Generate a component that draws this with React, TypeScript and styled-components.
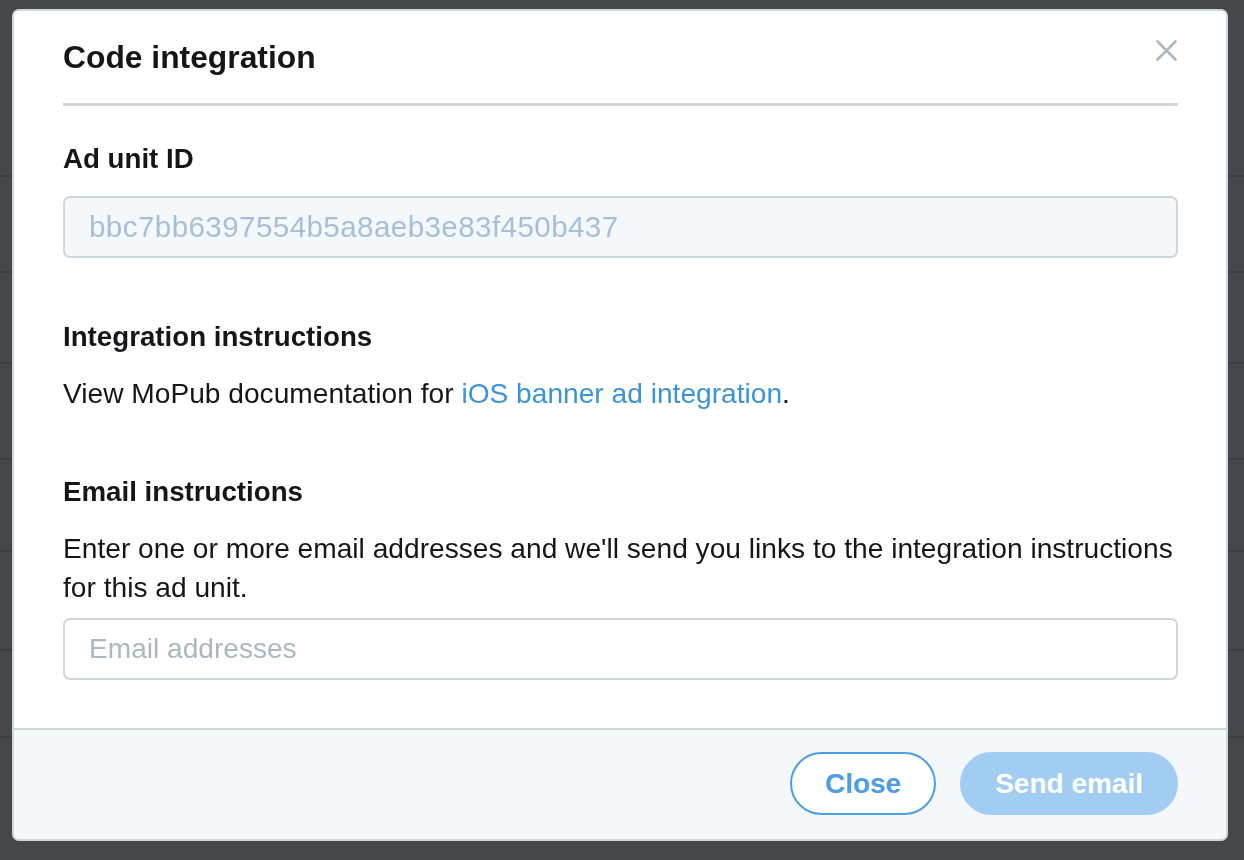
import React from "react";
import styled, { createGlobalStyle } from "styled-components";

const GlobalStyle = createGlobalStyle`
  html, body {
    margin: 0;
    padding: 0;
    background: #46474b;
    font-family: "Liberation Sans", Arial, Helvetica, sans-serif;
    color: #14171a;
  }
  * { box-sizing: border-box; }
`;

const Backdrop = styled.div`
  display: flex;
  flex-direction: column;
  height: 860px;
  overflow: hidden;
`;

const BackRow = styled.div<{ $h: number }>`
  height: ${(p) => p.$h}px;
  flex: none;
  border-bottom: 2px solid #3c3d41;
`;

const Overlay = styled.div`
  position: fixed;
  inset: 0;
  display: flex;
  align-items: flex-start;
  padding: 9px 0 0 12px;
`;

const Modal = styled.div`
  width: 1216px;
  background: #ffffff;
  border: 2px solid #ccd6dd;
  border-radius: 7px;
  overflow: hidden;
  display: flex;
  flex-direction: column;
`;

const Header = styled.div`
  margin: 0 48px 0 49px;
  padding-top: 26px;
  padding-bottom: 26px;
  border-bottom: 3px solid #d0d6db;
  display: flex;
  justify-content: space-between;
  align-items: flex-start;
`;

const Title = styled.h1`
  margin: 0;
  font-size: 31.8px;
  line-height: 40px;
  font-weight: 700;
  color: #14171a;
`;

const CloseIcon = styled.button`
  margin-top: 3px;
  margin-right: 1px;
  width: 21px;
  height: 21px;
  padding: 0;
  border: none;
  background: none;
  display: flex;
  cursor: pointer;
`;

const Body = styled.div`
  padding: 35px 48px 48px 49px;
  display: flex;
  flex-direction: column;
  gap: 61px;
`;

const Section = styled.section`
  display: flex;
  flex-direction: column;
`;

const Label = styled.h2<{ $mb?: number }>`
  margin: 0 0 ${(p) => p.$mb ?? 19}px;
  font-size: 27.7px;
  line-height: 36px;
  font-weight: 700;
  color: #14171a;
`;

const Text = styled.p`
  margin: 0;
  font-size: 28.15px;
  line-height: 39px;
  color: #14171a;
`;

const Link = styled.a`
  color: #3b94d9;
  text-decoration: none;
`;

const Input = styled.input<{ $readOnly?: boolean; $mt?: number }>`
  margin-top: ${(p) => p.$mt ?? 0}px;
  width: 100%;
  height: 62px;
  border: 2px solid #ccd6dd;
  border-radius: 7px;
  padding: 0 24px;
  font-family: "Liberation Sans", Arial, Helvetica, sans-serif;
  font-size: ${(p) => (p.$readOnly ? "29.6px" : "28.1px")};
  letter-spacing: ${(p) => (p.$readOnly ? "0.4px" : "0")};
  background: ${(p) => (p.$readOnly ? "#f5f8fa" : "#ffffff")};
  color: ${(p) => (p.$readOnly ? "#a6bfd9" : "#14171a")};
  outline: none;
  &::placeholder {
    color: #aab8c2;
  }
`;

const Footer = styled.div`
  background: #f5f8fa;
  border-top: 2px solid #ccd6dd;
  padding: 22px 48px 24px 49px;
  display: flex;
  justify-content: flex-end;
  gap: 24px;
`;

const Button = styled.button<{ $primary?: boolean }>`
  height: 63px;
  padding: 0 33px;
  border-radius: 32px;
  border: 2px solid ${(p) => (p.$primary ? "#a2cdf3" : "#4a9fe8")};
  background: ${(p) => (p.$primary ? "#a2cdf3" : "#ffffff")};
  color: ${(p) => (p.$primary ? "#ffffff" : "#4a9de6")};
  font-family: "Liberation Sans", Arial, Helvetica, sans-serif;
  font-size: 28px;
  font-weight: 700;
  cursor: pointer;
`;

const rows = [177, 96, 91, 96, 92, 99, 87, 200];

export default function App() {
  return (
    <>
      <GlobalStyle />
      <Backdrop>
        {rows.map((h, i) => (
          <BackRow key={i} $h={h} />
        ))}
      </Backdrop>
      <Overlay>
        <Modal role="dialog" aria-label="Code integration">
          <Header>
            <Title>Code integration</Title>
            <CloseIcon aria-label="Close">
              <svg width="21" height="21" viewBox="0 0 21 21">
                <path
                  d="M1.5 1.5 L19.5 19.5 M19.5 1.5 L1.5 19.5"
                  stroke="#aab8c2"
                  strokeWidth="2.6"
                  strokeLinecap="round"
                  fill="none"
                />
              </svg>
            </CloseIcon>
          </Header>
          <Body>
            <Section>
              <Label $mb={19}>Ad unit ID</Label>
              <Input $readOnly readOnly value="bbc7bb6397554b5a8aeb3e83f450b437" />
            </Section>
            <Section>
              <Label>Integration instructions</Label>
              <Text>
                View MoPub documentation for <Link href="#">iOS banner ad integration</Link>.
              </Text>
            </Section>
            <Section>
              <Label>Email instructions</Label>
              <Text>
                Enter one or more email addresses and we'll send you links to the integration instructions
                for this ad unit.
              </Text>
              <Input $mt={11} placeholder="Email addresses" />
            </Section>
          </Body>
          <Footer>
            <Button>Close</Button>
            <Button $primary>Send email</Button>
          </Footer>
        </Modal>
      </Overlay>
    </>
  );
}
